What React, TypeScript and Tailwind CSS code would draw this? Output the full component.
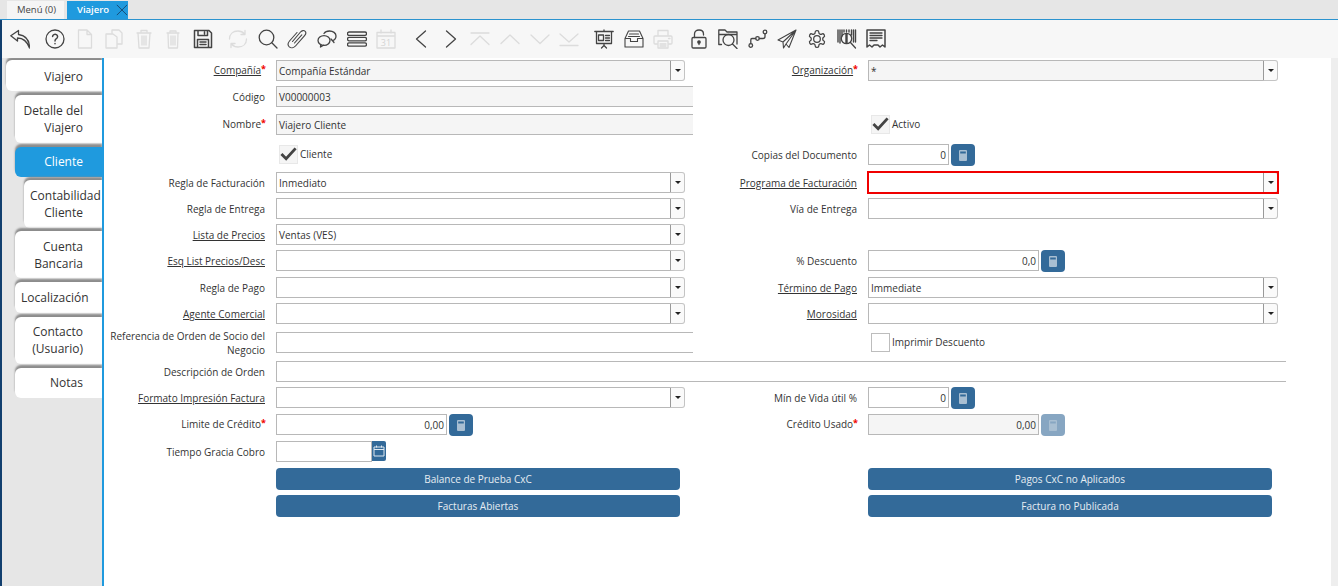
import React from "react";

const on = "fill-none stroke-[#444444]";
const off = "fill-none stroke-[#dcdcdc]";

function Ico({ children, off: disabled, w = 20 }: { children: React.ReactNode; off?: boolean; w?: number }) {
  return (
    <div className="w-[29.6px] h-[38px] shrink-0 flex items-center justify-center">
      <svg viewBox="0 0 20 20" width={w} height={w} strokeWidth={1.3} strokeLinecap="round" strokeLinejoin="round" className={disabled ? off : on}>
        {children}
      </svg>
    </div>
  );
}

function Gap() {
  return <div className="w-[5.5px] shrink-0" />;
}

function Toolbar() {
  return (
    <div className="h-[38px] bg-[#f7f7f7] flex pl-[3.2px] shrink-0">
      {/* back */}
      <Ico>
        <path d="M8.5 1.5 L0.8 6.8 L7.5 12 V9 C13 9 17 12 19.5 19 C19.5 12 16 6.5 8.5 5.5 Z" />
      </Ico>
      <Gap />
      {/* help */}
      <Ico>
        <circle cx="10" cy="10" r="9" />
        <path d="M7.6 7.6 a2.5 2.4 0 1 1 3.8 2.1 c-1 .6 -1.4 1 -1.4 2.3 M10 14.4 v.3" strokeWidth={1.5} />
      </Ico>
      {/* new */}
      <Ico off>
        <path d="M3.5 1 H12 L16.5 5.5 V19 H3.5 Z M12 1 V5.5 H16.5" />
      </Ico>
      {/* copy */}
      <Ico off>
        <path d="M8 4 V1 H15 L18 4 V15 H13 M2 5 H9 L13 8 V19 H2 Z" />
      </Ico>
      {/* delete */}
      <Ico off>
        <path d="M3 4 H17 M7 4 V1.5 H13 V4 M4 4 L5 19 H15 L16 4 M8 7 V16 M10 7 V16 M12 7 V16" />
      </Ico>
      <Ico off>
        <path d="M4 4 H16 M7 4 V2 H13 V4 M5 4 L5.5 19 H14.5 L15 4 M8 7 V16 M10 7 V16 M12 7 V16" />
      </Ico>
      {/* save */}
      <Ico>
        <path d="M1.5 1.5 H16 L18.5 4 V18.5 H1.5 Z M5 1.5 V6.5 H14.5 V1.5 M11.5 3 V5 M4.5 18.5 V10.5 H15.5 V18.5 M7 13 H13 M7 15.5 H13" strokeWidth={1.5} />
      </Ico>
      <Gap />
      {/* refresh */}
      <Ico off>
        <path d="M1.5 10 C1.5 5 5 2 10 2 C13 2 15 3.2 16.5 5 M18.5 10 C18.5 15 15 18 10 18 C7 18 5 16.8 3.5 15 M17 1.5 V5.5 H13 M3 18.5 V14.5 H7" />
      </Ico>
      {/* search */}
      <Ico>
        <circle cx="8.5" cy="8.5" r="7.3" />
        <path d="M13.8 13.8 L19 19" />
      </Ico>
      {/* attach */}
      <Ico>
        <path d="M5.5 12.5 L13.5 3 C15 1.3 17 1.2 18 2.2 C19.2 3.3 19 5 17.6 6.6 L8.5 17 C6.7 19 4 19.4 2.3 17.9 C0.6 16.3 0.8 14 2.5 12 L10 3.5 M7.5 14 L14.8 5.8" strokeWidth={1.1} />
      </Ico>
      {/* chat */}
      <Ico>
        <ellipse cx="7" cy="11.5" rx="6" ry="4.8" />
        <path d="M3.8 15.5 L3.5 18 L6.5 16.2" />
        <path d="M7 4.5 C8 3 10 2 12.5 2 C16 2 19 4 19 7 C19 9.5 17.5 11 15.5 11.7 M15.5 11.7 L14 10 M15.5 11.7 L17 13.5" />
      </Ico>
      {/* list */}
      <Ico>
        <rect x="0.5" y="3" width="19" height="3.4" rx="1.6" />
        <rect x="0.5" y="8.4" width="19" height="3.4" rx="1.6" />
        <rect x="0.5" y="13.8" width="19" height="3.4" rx="1.6" />
      </Ico>
      {/* calendar */}
      <Ico off>
        <path d="M1 3.5 H19 V19 H1 Z M1 7 H19 M5 1 V4 M15 1 V4" />
        <text x="10" y="16.5" textAnchor="middle" fontSize="9" fontFamily="'Open Sans', sans-serif" fill="#d4d4d4" stroke="none">31</text>
      </Ico>
      <Gap />
      {/* navigation */}
      <Ico><path d="M14.5 2 L5.5 10 L14.5 18" /></Ico>
      <Ico><path d="M5.5 2 L14.5 10 L5.5 18" /></Ico>
      <Ico off><path d="M1 4 H19 M1 15.5 L10 7 L19 15.5" /></Ico>
      <Ico off><path d="M1 14.5 L10 6 L19 14.5" /></Ico>
      <Ico off><path d="M1 6 L10 14.5 L19 6" /></Ico>
      <Ico off><path d="M1 5 L10 13 L19 5 M1 16.5 H19" /></Ico>
      <Gap />
      {/* report */}
      <Ico>
        <path d="M0.8 2.5 H19.2 M2.5 2.5 V14.5 H17.5 V2.5 M10 1 V2.5 M10 14.5 V16.5 M7.5 19 L10 16.5 L12.5 19" />
        <rect x="4.5" y="6" width="5" height="5.5" />
        <path d="M11.5 6.5 H15.5 M11.5 9 H15.5 M11.5 11.5 H15.5" />
      </Ico>
      {/* inbox */}
      <Ico>
        <path d="M4.5 2 H15.5 L19 9.5 V18 H1 V9.5 Z M1 9.5 H6.5 V12.5 H13.5 V9.5 H19 M5.5 5 H14.5 M4.5 7.5 H15.5" strokeWidth={1.1} />
      </Ico>
      {/* print */}
      <Ico off>
        <path d="M5 7 V1.5 H15 V7 M5 15 H2 C1.3 15 1 14.6 1 14 V8 C1 7.4 1.3 7 2 7 H18 C18.7 7 19 7.4 19 8 V14 C19 14.6 18.7 15 18 15 H15 M5 12 H15 V19 H5 Z M7 15 H13 M7 17 H13 M15.5 9.5 H17" />
      </Ico>
      <Gap />
      {/* lock */}
      <Ico>
        <path d="M5.5 8.5 V5 C5.5 2.5 7.5 1 10 1 C12.5 1 14.5 2.5 14.5 5 V6" />
        <rect x="3" y="8.5" width="14" height="10.5" rx="1.2" />
        <circle cx="10" cy="13" r="1.2" fill="#444444" />
        <path d="M10 13 V15.5" />
      </Ico>
      {/* zoom across */}
      <Ico>
        <path d="M3.5 15.5 H0.8 V1 H7 L9 3 H19 V15 M1 5.5 H19" />
        <circle cx="10.5" cy="11" r="5.5" />
        <path d="M14.5 15 L19 19.5" />
      </Ico>
      {/* workflow */}
      <Ico>
        <circle cx="2.8" cy="16.5" r="1.8" />
        <circle cx="9.5" cy="9.5" r="1.8" />
        <circle cx="17" cy="3" r="1.8" />
        <path d="M2.8 14.7 V11 C2.8 10 3.2 9.5 4 9.5 H7.7 M11.3 9.5 H15 C16.2 9.5 17 8.8 17 7.5 V4.8" />
      </Ico>
      {/* send */}
      <Ico>
        <path d="M19 1 L1 11 L6 13 L19 1 L9 15 L12 18.5 Z M6 13 L6.5 19 L9 15" strokeWidth={1.1} />
      </Ico>
      {/* gear */}
      <Ico>
        <g transform="scale(0.833)" strokeWidth={1.5}>
          <path d="M12.22 2h-.44a2 2 0 0 0-2 2v.18a2 2 0 0 1-1 1.73l-.43.25a2 2 0 0 1-2 0l-.15-.08a2 2 0 0 0-2.73.73l-.22.38a2 2 0 0 0 .73 2.73l.15.1a2 2 0 0 1 1 1.72v.51a2 2 0 0 1-1 1.74l-.15.09a2 2 0 0 0-.73 2.73l.22.38a2 2 0 0 0 2.73.73l.15-.08a2 2 0 0 1 2 0l.43.25a2 2 0 0 1 1 1.73V20a2 2 0 0 0 2 2h.44a2 2 0 0 0 2-2v-.18a2 2 0 0 1 1-1.73l.43-.25a2 2 0 0 1 2 0l.15.08a2 2 0 0 0 2.73-.73l.22-.39a2 2 0 0 0-.73-2.73l-.15-.08a2 2 0 0 1-1-1.74v-.5a2 2 0 0 1 1-1.74l.15-.09a2 2 0 0 0 .73-2.73l-.22-.38a2 2 0 0 0-2.73-.73l-.15.08a2 2 0 0 1-2 0l-.43-.25a2 2 0 0 1-1-1.73V4a2 2 0 0 0-2-2z" />
          <circle cx="12" cy="12" r="4" />
        </g>
      </Ico>
      {/* barcode */}
      <Ico>
        <path d="M1 1 V13 M3 1 V14 M5 1 V7 M14.5 1 V6 M16.5 1 V13 M18.5 1 V13 M7 1 V3 M9.5 1 V3 M12 1 V3" strokeWidth={1.4} />
        <circle cx="9.5" cy="9.5" r="5.2" />
        <path d="M9.5 5.5 V13.5" strokeWidth={2.4} />
        <path d="M13.5 13.5 L18.5 19" />
      </Ico>
      {/* receipt */}
      <Ico>
        <path d="M1 1 H19 V18 L16.5 16 L14 18 L12 16 H8 L6 18 L3.5 16 L1 18 Z" strokeWidth={1.5} />
        <path d="M4 4 H16 M4 6.5 H16 M4 9 H16 M4 11.5 H11" />
      </Ico>
    </div>
  );
}

const tabs = [
  { lines: ["Viajero"], box: "ml-[4px] h-[31px] mt-[2px] pt-[1px]" },
  { lines: ["Detalle del", "Viajero"], box: "ml-[13px] h-[48px] mt-[4px]" },
  { lines: ["Cliente"], box: "ml-[13px] h-[30px] mt-[4px] pb-[2px]", active: true },
  { lines: ["Contabilidad", "Cliente"], box: "ml-[22px] h-[48px] mt-[3px]" },
  { lines: ["Cuenta", "Bancaria"], box: "ml-[13px] h-[47px] mt-[3px]" },
  { lines: ["Localización"], box: "ml-[13px] h-[31px] mt-[4px]" },
  { lines: ["Contacto", "(Usuario)"], box: "ml-[13px] h-[47px] mt-[4px] pb-[2px]" },
  { lines: ["Notas"], box: "ml-[13px] h-[30px] mt-[4px] pb-[2px]" },
];

function Sidebar() {
  return (
    <div className="w-[100px] shrink-0 bg-[#e6e6e6] flex flex-col overflow-hidden">
      {tabs.map((t) => (
        <div
          key={t.lines[0]}
          className={`${t.box} shrink-0 rounded-l-[6px] flex items-center pl-[6px] pr-[19px] text-[12px] leading-[17px] shadow-[0_-3px_2px_#8c8c8c] ${
            t.active ? "bg-[#1f9ade] text-white" : "bg-white text-[#333333]"
          }`}
        >
          <div className="w-full min-w-0 text-right">
            {t.lines.map((l) => (
              <div key={l}>{l}</div>
            ))}
          </div>
        </div>
      ))}
    </div>
  );
}

function Label({ text, req, link }: { text: string; req?: boolean; link?: boolean }) {
  return (
    <div className={`h-[21px] flex items-center justify-end text-right pl-[6px] leading-[14px] text-[#333333] ${req ? "pr-[10px]" : "pr-[11px]"}`}>
      <span>
        <span className={link ? "underline" : ""}>{text}</span>
        {req && <span className="text-[#f00000] text-[9px] font-bold relative -top-[2px]">*</span>}
      </span>
    </div>
  );
}

function Caret() {
  return (
    <svg width="6" height="3" viewBox="0 0 6 3" className="fill-[#222222]">
      <path d="M0 0 H6 L3 3 Z" />
    </svg>
  );
}

function Combo({ value = "", ro, hl, w = "w-[409px]" }: { value?: string; ro?: boolean; hl?: boolean; w?: string }) {
  return (
    <div className={`${w} h-[21px] flex ${hl ? "outline-2 -outline-offset-1 outline-[#f00000]" : ""}`}>
      <div className={`flex-1 border-y border-l border-[#b8b8b8] pl-[2px] pt-[1px] flex items-center text-[#333333] ${ro ? "bg-[#f5f5f5]" : "bg-white"}`}>{value}</div>
      <div className="w-[15px] bg-[#fafafa] border border-[#c4c4c4] border-l-[#999999] rounded-r-[3px] flex items-center justify-center">
        <Caret />
      </div>
    </div>
  );
}

function Text({ value = "", ro, w = "w-[417px]" }: { value?: string; ro?: boolean; w?: string }) {
  return (
    <div className={`${w} h-[21px] border-y border-l border-[#b8b8b8] pl-[2px] pt-[1px] flex items-center text-[#333333] ${ro ? "bg-[#f5f5f5]" : "bg-white"}`}>
      {value}
    </div>
  );
}

function CalcIcon() {
  return (
    <svg width="8" height="11" viewBox="0 0 8 11" className="fill-[#a9bfd2]">
      <path d="M0 1 Q0 0 1 0 H7 Q8 0 8 1 V10 Q8 11 7 11 H1 Q0 11 0 10 Z M1.2 1.5 V3.5 H6.8 V1.5 Z" fillRule="evenodd" />
    </svg>
  );
}

function NumField({ value, w, ro }: { value: string; w: string; ro?: boolean }) {
  return (
    <div className="flex items-start gap-[2px]">
      <div className={`${w} h-[21px] border border-[#b8b8b8] pr-[2px] pt-[1px] flex items-center justify-end text-[#333333] ${ro ? "bg-[#f5f5f5]" : "bg-white"}`}>{value}</div>
      <div className={`w-[24px] h-[22px] rounded-[4px] flex items-center justify-center ${ro ? "bg-[#87a6c2]" : "bg-[#336a99]"}`}>
        <CalcIcon />
      </div>
    </div>
  );
}

function Check({ checked, label }: { checked?: boolean; label: string }) {
  return (
    <div className="flex items-center h-[20px] pl-[3px]">
      <div className={`w-[19px] h-[19px] flex items-center justify-center ${checked ? "bg-[#f5f5f5] border border-[#e8e8e8]" : "bg-white border border-[#bdbdbd]"}`}>
        {checked && (
          <svg width="18" height="16" viewBox="0 0 18 16" className="fill-none stroke-[#444444]" strokeWidth={3}>
            <path d="M1.5 8 L6.5 13 L16.5 2" />
          </svg>
        )}
      </div>
      <span className="ml-[2px] pt-[1px] text-[#333333]">{label}</span>
    </div>
  );
}

function Btn({ text }: { text: string }) {
  return <div className="w-[404px] h-[22px] pt-[1px] rounded-[4px] bg-[#336a99] text-[#e6edf3] flex items-center justify-center">{text}</div>;
}

const grid = "grid grid-cols-[172px_417px_175px_418px] shrink-0";

function Form() {
  return (
    <div className="flex-1 bg-white pt-[2px] flex flex-col text-[10px]">
      <div className={`${grid} h-[26px]`}>
        <Label text="Compañía" req link />
        <Combo value="Compañía Estándar" ro />
        <Label text="Organización" req link />
        <Combo value="*" ro w="w-[410px]" />
      </div>
      <div className={`${grid} h-[28px]`}>
        <Label text="Código" />
        <Text value="V00000003" ro />
      </div>
      <div className={`${grid} h-[30px]`}>
        <Label text="Nombre" req />
        <Text value="Viajero Cliente" ro />
        <div />
        <Check checked label="Activo" />
      </div>
      <div className={`${grid} h-[28px]`}>
        <div />
        <Check checked label="Cliente" />
        <Label text="Copias del Documento" />
        <NumField value="0" w="w-[81px]" />
      </div>
      <div className={`${grid} h-[26px]`}>
        <Label text="Regla de Facturación" />
        <Combo value="Inmediato" />
        <Label text="Programa de Facturación" link />
        <Combo hl w="w-[410px]" />
      </div>
      <div className={`${grid} h-[26px]`}>
        <Label text="Regla de Entrega" />
        <Combo />
        <Label text="Vía de Entrega" />
        <Combo w="w-[410px]" />
      </div>
      <div className={`${grid} h-[26px]`}>
        <Label text="Lista de Precios" link />
        <Combo value="Ventas (VES)" />
      </div>
      <div className={`${grid} h-[27px]`}>
        <Label text="Esq List Precios/Desc" link />
        <Combo />
        <Label text="% Descuento" />
        <NumField value="0,0" w="w-[171px]" />
      </div>
      <div className={`${grid} h-[26px]`}>
        <Label text="Regla de Pago" />
        <Combo />
        <Label text="Término de Pago" link />
        <Combo value="Immediate" w="w-[410px]" />
      </div>
      <div className={`${grid} h-[29px]`}>
        <Label text="Agente Comercial" link />
        <Combo />
        <Label text="Morosidad" link />
        <Combo w="w-[410px]" />
      </div>
      <div className={`${grid} h-[29px]`}>
        <Label text="Referencia de Orden de Socio del Negocio" />
        <Text />
        <div />
        <Check label="Imprimir Descuento" />
      </div>
      <div className={`${grid} h-[26px]`}>
        <Label text="Descripción de Orden" />
        <div className="col-span-3 h-[21px] bg-white border-y border-l border-[#b8b8b8]" />
      </div>
      <div className={`${grid} h-[27px]`}>
        <Label text="Formato Impresión Factura" link />
        <Combo />
        <Label text="Mín de Vida útil %" />
        <NumField value="0" w="w-[81px]" />
      </div>
      <div className={`${grid} h-[27px]`}>
        <Label text="Limite de Crédito" req />
        <NumField value="0,00" w="w-[171px]" />
        <Label text="Crédito Usado" req />
        <NumField value="0,00" w="w-[171px]" ro />
      </div>
      <div className={`${grid} h-[27px]`}>
        <Label text="Tiempo Gracia Cobro" />
        <div className="flex items-start">
          <div className="w-[96px] h-[21px] bg-white border border-[#b8b8b8]" />
          <div className="w-[14px] h-[20px] rounded-r-[2px] bg-[#336a99] flex items-center justify-center">
            <svg width="12" height="12" viewBox="0 0 12 12" className="fill-none stroke-[#dfe8f0]" strokeWidth={1}>
              <path d="M1 2 H11 V11 H1 Z M1 4.5 H11 M3.5 0.5 V2.5 M8.5 0.5 V2.5" />
            </svg>
          </div>
        </div>
      </div>
      <div className={`${grid} h-[27px]`}>
        <div />
        <Btn text="Balance de Prueba CxC" />
        <div />
        <Btn text="Pagos CxC no Aplicados" />
      </div>
      <div className={`${grid} h-[27px]`}>
        <div />
        <Btn text="Facturas Abiertas" />
        <div />
        <Btn text="Factura no Publicada" />
      </div>
    </div>
  );
}

export default function App() {
  return (
    <div className="w-[1338px] h-[586px] overflow-hidden flex flex-col bg-[#e6e6e6] font-['Open_Sans',sans-serif]">
      {/* window tabs */}
      <div className="h-[20px] shrink-0 bg-[#e6e6e6] border-b border-[#2b93cf] flex items-end pl-[7px] text-[9.5px]">
        <div className="w-[57px] h-[18px] pl-[2px] bg-[#f5f5f5] text-[#444444] flex items-center justify-center">Menú (0)</div>
        <div className="ml-[3px] w-[61px] h-[18px] bg-[#1f9ade] text-white font-semibold flex items-center pl-[10px]">
          Viajero
          <svg width="14" height="14" viewBox="0 0 14 14" className="ml-[7px] fill-none stroke-[#16476e]" strokeWidth={1.1}>
            <path d="M1 1 L13 13 M13 1 L1 13" />
          </svg>
        </div>
      </div>
      <div className="flex-1 flex min-h-0">
        <div className="w-[2px] shrink-0 bg-[#123f6e]" />
        <div className="flex-1 flex flex-col min-w-0">
          <Toolbar />
          <div className="flex-1 flex min-h-0">
            <Sidebar />
            <div className="w-[2px] shrink-0 bg-[#1f9ade]" />
            <Form />
            <div className="w-[7px] shrink-0 bg-[#eeeeee]" />
          </div>
        </div>
      </div>
    </div>
  );
}
